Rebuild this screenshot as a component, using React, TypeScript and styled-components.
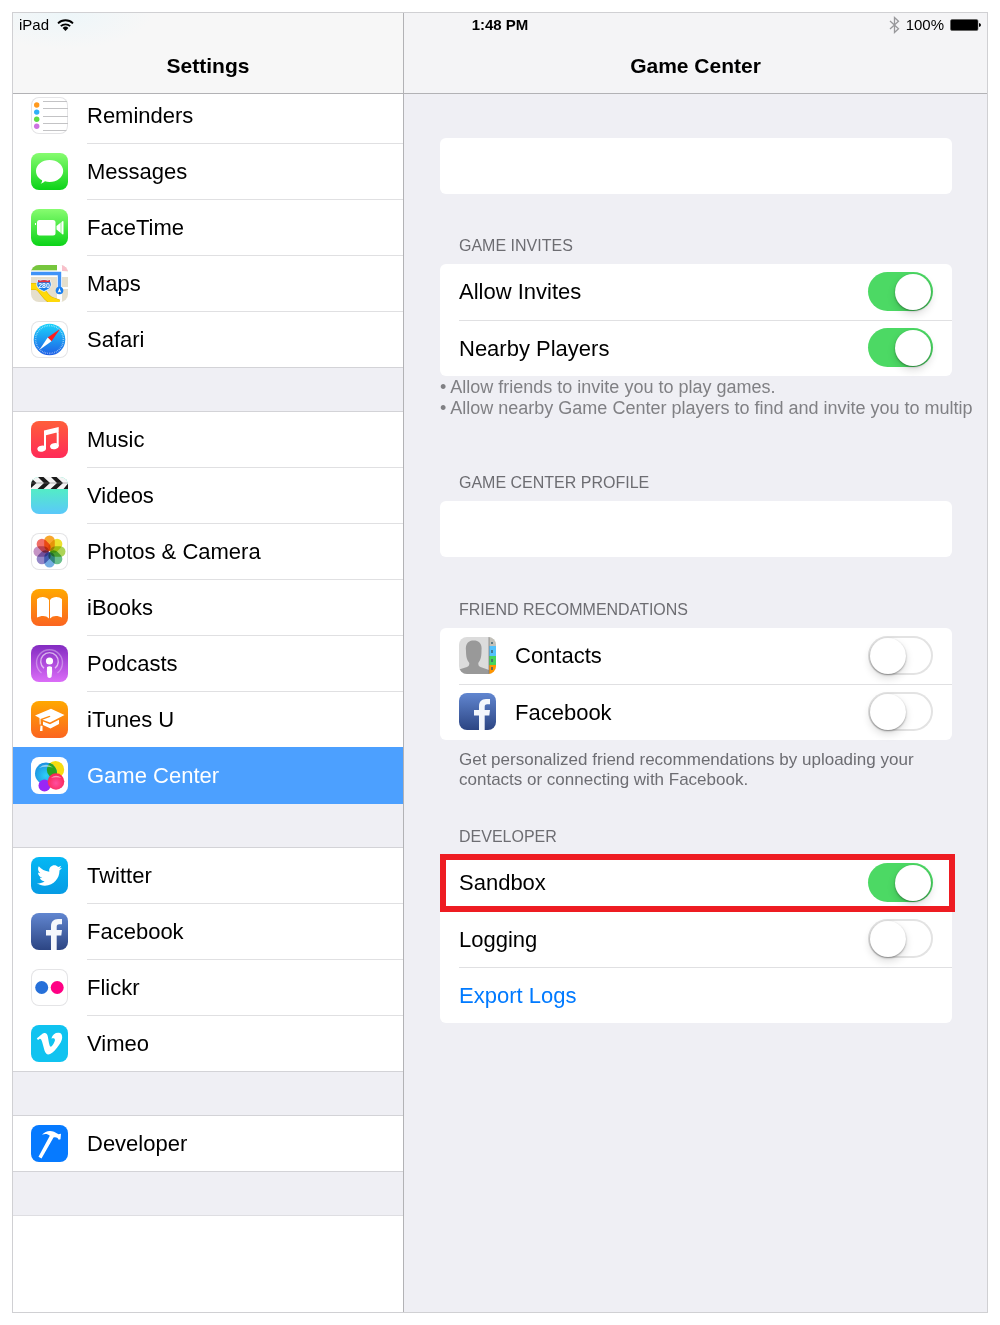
import React, { useState } from "react";
import styled, { createGlobalStyle, css } from "styled-components";
import { FaTwitter, FaVimeoV } from "react-icons/fa";

const GlobalStyle = createGlobalStyle`
  *, *::before, *::after { box-sizing: border-box; }
  body {
    margin: 0;
    background: #fff;
    color: #000;
    font-family: "Liberation Sans", Arial, Helvetica, sans-serif;
  }
`;

const SIDEBAR_WIDTH = "391px";

/* ---------- frame ---------- */

const Page = styled.div`
  min-height: 100vh;
  padding: 12px;
  display: flex;
`;

const Device = styled.div`
  flex: 1;
  min-width: 0;
  display: flex;
  flex-direction: column;
  border: 1px solid #d0d0d3;
`;

const TopBar = styled.header`
  position: relative;
  z-index: 1;
  display: grid;
  grid-template-columns: ${SIDEBAR_WIDTH} 1fr;
  grid-template-rows: 24px 56px;
  border-bottom: 1px solid #b2b2b5;
`;

const TitleCell = styled.div<{ $side: "left" | "right" }>`
  grid-row: 1 / 3;
  grid-column: ${(p) => (p.$side === "left" ? 1 : 2)};
  display: flex;
  align-items: flex-end;
  justify-content: center;
  padding-bottom: 15px;
  background: ${(p) =>
    p.$side === "left"
      ? "radial-gradient(ellipse 90px 36px at 50px 0, #edf6f9, #f7f7f7)"
      : "#f4f4f6"};
  border-right: ${(p) => (p.$side === "left" ? "1px solid #b2b2b5" : "0")};
`;

const Title = styled.h1`
  margin: 0;
  font-size: 21px;
  line-height: 24px;
  font-weight: 700;
`;

const StatusBar = styled.div`
  grid-row: 1;
  grid-column: 1 / 3;
  display: grid;
  grid-template-columns: 1fr auto 1fr;
  align-items: center;
  padding: 0 6px;
  font-size: 15px;
  line-height: 24px;
`;

const StatusGroup = styled.div<{ $end?: boolean }>`
  display: flex;
  align-items: center;
  gap: ${(p) => (p.$end ? 6 : 8)}px;
  justify-content: ${(p) => (p.$end ? "flex-end" : "flex-start")};
`;

const Time = styled.time`
  font-weight: 700;
`;

const Body = styled.div`
  flex: 1;
  display: grid;
  grid-template-columns: ${SIDEBAR_WIDTH} minmax(0, 1fr);
`;

/* ---------- sidebar ---------- */

const Sidebar = styled.nav`
  display: flex;
  flex-direction: column;
  gap: 44px;
  background: #efeff4;
  border-right: 1px solid #b2b2b5;
`;

const NavGroup = styled.ul<{ $scrolled?: boolean }>`
  list-style: none;
  margin: ${(p) => (p.$scrolled ? "-6px 0 0" : "0")};
  padding: 0;
  background: #fff;
  box-shadow: 0 -1px #d3d3d7, 0 -1px #d3d3d7 inset;
`;

const NavTail = styled.div`
  flex: 1;
  background: #fff;
  box-shadow: 0 -1px #dedee2;
`;

const NavLabel = styled.span`
  flex: 1;
  align-self: stretch;
  display: flex;
  align-items: center;
  border-bottom: 1px solid #e0e0e2;
`;

const NavLink = styled.a<{ $selected?: boolean }>`
  position: relative;
  display: flex;
  align-items: center;
  gap: 19px;
  height: 56px;
  padding-left: 18px;
  font-size: 22px;
  line-height: 26px;
  color: #000;
  text-decoration: none;
  li:last-child > & ${NavLabel} {
    border-color: transparent;
  }
  ${(p) =>
    p.$selected &&
    css`
      background: #4ca0ff;
      box-shadow: 0 -1px #4ca0ff;
      color: #fff;
    `}
`;

/* ---------- detail pane ---------- */

const Main = styled.main`
  overflow: hidden;
  padding: 44px 35px 44px 36px;
  background: #efeff4;
`;

const Section = styled.section<{ $gap?: number }>`
  margin-top: ${(p) => p.$gap ?? 0}px;
`;

const SectionTitle = styled.h2`
  margin: 0;
  padding: 0 19px 8px;
  font-size: 16px;
  line-height: 20px;
  font-weight: 400;
  color: #6d6d72;
  text-transform: uppercase;
`;

const Card = styled.div`
  min-height: 56px;
  padding-left: 19px;
  background: #fff;
  border-radius: 6px;
`;

const Row = styled.div<{ $marked?: boolean }>`
  display: flex;
  align-items: center;
  gap: 19px;
  height: 56px;
  padding-right: 19px;
  font-size: 22px;
  line-height: 26px;
  & + & {
    border-top: 1px solid #e0e0e2;
  }
  ${(p) =>
    p.$marked &&
    css`
      position: relative;
      &::after {
        content: "";
        position: absolute;
        inset: -1px -3px -1px -19px;
        border: 6px solid #ee1c22;
        pointer-events: none;
      }
    `}
`;

const RowLabel = styled.label`
  flex: 1;
`;

const Switch = styled.input`
  appearance: none;
  flex: none;
  display: flex;
  width: 65px;
  height: 39px;
  margin: 0 0 2px;
  padding: 2px;
  border-radius: 20px;
  background: #fff;
  box-shadow: inset 0 0 0 2px #e3e3e3;
  cursor: pointer;
  &::before {
    content: "";
    width: 36px;
    height: 36px;
    border-radius: 50%;
    background: #fff;
    box-shadow: 0 1px 2px rgba(0, 0, 0, 0.35), 0 4px 9px rgba(0, 0, 0, 0.14);
  }
  &:checked {
    justify-content: flex-end;
    background: #4cd964;
    box-shadow: none;
  }
`;

const LinkButton = styled.button`
  padding: 0;
  border: 0;
  background: none;
  font: inherit;
  color: #007aff;
  cursor: pointer;
`;

const Hints = styled.ul`
  list-style: none;
  margin: 0;
  padding: 1px 0 0;
  font-size: 18px;
  line-height: 21px;
  color: #808084;
  white-space: nowrap;
`;

const Footnote = styled.p`
  margin: 0;
  padding: 10px 19px 0;
  font-size: 17px;
  line-height: 20px;
  color: #6d6d72;
`;

/* ---------- icons ---------- */

const Tile = styled.svg.attrs({ viewBox: "0 0 37 37", "aria-hidden": true })<{
  $bg: string;
  $outlined?: boolean;
}>`
  flex: none;
  width: 37px;
  height: 37px;
  margin-bottom: 2px;
  border-radius: 8px;
  overflow: hidden;
  background: ${(p) => p.$bg};
  ${(p) => p.$outlined && "box-shadow: inset 0 0 0 1px #e4e4e6;"}
`;

const Petal = styled.rect`
  mix-blend-mode: multiply;
`;

const RemindersIcon = () => (
  <Tile $bg="#fff" $outlined>
    {["#ff9a1f", "#2fb0f8", "#5fdc46", "#cc73e1"].map((c, i) => (
      <circle key={c} cx="5.7" cy={8 + i * 7.1} r="2.7" fill={c} />
    ))}
    <path d="M12 4.5H36M12 11.5H37M12 19.5H37M12 26.5H37M12 33.5H36" stroke="#c3c3c5" />
  </Tile>
);

const MessagesIcon = () => (
  <Tile $bg="linear-gradient(#87fc70, #0bd318)">
    <path
      d="M18.6 7C26 7 32.2 11.8 32.2 18S26 29 18.6 29c-1.700 0-3.200-.2-4.600-.7-1.300 1.300-2.800 2-4.400 2.400 1-.9 1.600-2.200 1.500-3.500C7.300 25.300 5 22 5 18 5 11.800 11.200 7 18.600 7z"
      fill="#fff"
    />
  </Tile>
);

const FaceTimeIcon = () => (
  <Tile $bg="linear-gradient(#87fc70, #0bd318)">
    <rect x="6" y="11" width="18.500" height="15.500" rx="2.500" fill="#fff" />
    <path d="M25.500 17 31.300 12.200Q32.500 11.500 32.500 13V24.500Q32.500 26 31.300 25.200L25.500 20.500z" fill="#fff" />
    <path d="M30 12v13.500" stroke="#4be642" strokeWidth=".6" />
    <rect x="4" y="14" width="1" height="2" fill="#fff" />
  </Tile>
);

const MapsIcon = () => (
  <Tile $bg="#e5dfcd">
    <path d="M0 0H26V5.500H0z" fill="#76c63d" />
    <path d="M31 0H37V6H31z" fill="#f9c0cb" />
    <path d="M0 5.500H26V0h5V6l6 .5V12H31V22h6v2H31V37H26V12H0z" fill="#fff" />
    <path d="M-2 21.500H5C11 22 14 34 21 35.500L28 38" stroke="#d9b300" strokeWidth="7" fill="none" />
    <path d="M-2 21.500H5C11 22 14 34 21 35.500L28 38" stroke="#ffd90a" strokeWidth="6" fill="none" />
    <path d="M0 8.500H28.500V25" stroke="#3f93f8" strokeWidth="3.400" fill="none" />
    <circle cx="28.500" cy="25.500" r="3.800" fill="#1a80f0" />
    <path d="M28.500 23 30.200 27.500 28.500 26.800 26.800 27.500z" fill="#fff" />
    <path d="M7 14.500 9 15.500 13 14.500 17 15.500 19 14.500C19 17 21 18 20 21S16 25 13 26.500C10 25 7 24 6 21S7 17 7 14.500z" fill="#1b7ee8" stroke="#fff" strokeWidth=".8" />
    <path d="M7.200 14.800 9 15.700 13 14.900 17 15.700 18.800 14.800 19 17.200H7z" fill="#e8303a" />
    <text x="13" y="23" fontSize="7" fontWeight="700" fill="#fff" textAnchor="middle">280</text>
  </Tile>
);

const SafariIcon = () => (
  <Tile $bg="#fff" $outlined>
    <defs>
      <linearGradient id="safari-dial" x1="0" y1="0" x2="0" y2="1">
        <stop offset="0" stopColor="#1bd3fb" />
        <stop offset="1" stopColor="#1f5fe6" />
      </linearGradient>
    </defs>
    <circle cx="18.500" cy="18.500" r="15.800" fill="url(#safari-dial)" />
    <circle cx="18.500" cy="18.500" r="13.900" fill="none" stroke="#fff" strokeOpacity=".65" strokeWidth="1.600" strokeDasharray=".6 1.200" />
    <path d="M29 8 20.500 20.300 16.700 16.600z" fill="#ff1d1d" />
    <path d="M8.300 29 16.700 16.600 20.500 20.300z" fill="#fff" />
  </Tile>
);

const MusicIcon = () => (
  <Tile $bg="linear-gradient(#ff5e3a, #ff2a58)">
    <path d="M13 9.500 27.700 6V11L15 14.200V28H13zM25.700 8h2V25h-2z" fill="#fff" />
    <ellipse cx="10.700" cy="27.700" rx="4.400" ry="3" fill="#fff" transform="rotate(-12 10.700 27.700)" />
    <ellipse cx="23.400" cy="25.200" rx="4.400" ry="3" fill="#fff" transform="rotate(-12 23.400 25.200)" />
  </Tile>
);

const VideosIcon = () => (
  <Tile $bg="linear-gradient(#53eec4 30%, #5ac8fa)">
    <path d="M0 0H37V12H0z" fill="#f4f4f4" />
    <path
      d="M7 0h5.500L19 6h-6zM13 6h6l-6.500 6H6.500zM20 0h5.500L32 6h-6zM26 6h6l-6.500 6H19.500zM33 0h4v3.500zM37 6.500V12H32.500zM0 1 5.500 6H0zM0 6H5.500L0 11z"
      fill="#1b1b1b"
    />
    <path d="M0 6H37" stroke="#777" strokeWidth=".5" />
  </Tile>
);

const petals = ["#f7a01b", "#ecdf1c", "#a5d048", "#5dbb82", "#68a6e0", "#8a7dc2", "#c08bc0", "#f0635a"];

const PhotosIcon = () => (
  <Tile $bg="#fff" $outlined>
    {petals.map((c, i) => (
      <Petal
        key={c}
        x="-5.300"
        y="-16"
        width="10.600"
        height="15.500"
        rx="5.300"
        fill={c}
        fillOpacity=".92"
        transform={`translate(18.500 18.500) rotate(${i * 45})`}
      />
    ))}
  </Tile>
);

const IBooksIcon = () => (
  <Tile $bg="linear-gradient(#ffa800, #fb6420)">
    <path d="M18 11C16.500 8.700 14 8 11.700 8 9.500 8 7.500 8.800 6 10.200V28.500C10 26.500 15 26 18 29.500zM19 11C20.500 8.700 23 8 25.300 8 27.500 8 29.500 8.800 31 10.200V28.500C27 26.500 22 26 19 29.500z" fill="#fff" />
  </Tile>
);

const PodcastsIcon = () => (
  <Tile $bg="linear-gradient(#832bc1, #db6df8)">
    <g fill="none" stroke="#fff">
      <path d="M10.500 28A13 13 0 1 1 26.500 28" strokeOpacity=".35" strokeWidth="1.400" />
      <path d="M13 23.300A8.800 8.800 0 1 1 24 23.300" strokeOpacity=".6" strokeWidth="1.400" />
    </g>
    <circle cx="18.500" cy="16" r="3.600" fill="#fff" />
    <path d="M16 22Q18.500 20.300 21 22 21.500 27 20.500 32 18.500 34 16.500 32 15.500 27 16 22z" fill="#fff" />
  </Tile>
);

const ITunesUIcon = () => (
  <Tile $bg="linear-gradient(#ffa800, #fb6420)">
    <path d="M4 14.500 20 7.800 33.500 14 19 21.500 11.500 18.700 19.500 15.700 18.500 14.700 9.500 18 9.700 23.500H8.700L8.500 17z" fill="#fff" />
    <path d="M12 20.500 19 23.200 28 18.800V23L19.500 27.500 12 24z" fill="#fff" />
    <path d="M9.500 24.500 11.500 25V30H9z" fill="#fff" />
  </Tile>
);

const GameCenterIcon = () => (
  <Tile $bg="#fff">
    <defs>
      <radialGradient id="bubble-blue" cx=".5" cy=".6" r=".6">
        <stop offset="0" stopColor="#2fd0f7" />
        <stop offset="1" stopColor="#1c8fe0" />
      </radialGradient>
      <radialGradient id="bubble-pink" cx=".5" cy=".6" r=".6">
        <stop offset="0" stopColor="#ff4fa0" />
        <stop offset="1" stopColor="#fb2350" />
      </radialGradient>
      <clipPath id="bubble-clip">
        <circle cx="24.500" cy="12.700" r="8.700" />
      </clipPath>
    </defs>
    <circle cx="24.500" cy="12.700" r="8.700" fill="#f6dc10" />
    <circle cx="15" cy="16.500" r="11" fill="url(#bubble-blue)" />
    <circle cx="15" cy="16.500" r="11" fill="#28a322" clipPath="url(#bubble-clip)" />
    <circle cx="13.500" cy="28.500" r="6" fill="#9a26f5" />
    <circle cx="25" cy="24.500" r="8.300" fill="url(#bubble-pink)" />
    <path d="M8 11Q14.500 5 22 10.500 14 9 8 11zM20 21Q25 16.500 30.500 21 25 19.500 20 21z" fill="#fff" fillOpacity=".5" />
  </Tile>
);

const TwitterIcon = () => (
  <Tile $bg="linear-gradient(#04b8f4, #069be4)">
    <FaTwitter x="6" y="6" size={25} color="#fff" />
  </Tile>
);

const FacebookIcon = () => (
  <Tile $bg="linear-gradient(#6186d0, #2c4583)">
    <path d="M20 37V22.500H15V17h5V13.500C20 8.800 22.500 6 27 6h4v5.300H28.300C26.200 11.300 25.700 12.200 25.700 14V17H31l-.7 5.500H25.700V37z" fill="#f4f7fc" />
  </Tile>
);

const FlickrIcon = () => (
  <Tile $bg="#fff" $outlined>
    <circle cx="10.700" cy="18.500" r="6.500" fill="#2670d9" />
    <circle cx="26.200" cy="18.500" r="6.500" fill="#ff0084" />
  </Tile>
);

const VimeoIcon = () => (
  <Tile $bg="#10c3f0">
    <FaVimeoV x="4" y="4" size={29} color="#fff" />
  </Tile>
);

const DeveloperIcon = () => (
  <Tile $bg="#067aff">
    <path d="M11 9.800C14 6 19 5 23 6.800L27.500 9.300 30 8.800 29.500 14.200 27.700 14.800C26.500 12.500 25 12 22.500 12.500L10.500 33.500 7.500 31.800 18.800 10.700C16.500 8.500 14 8.500 11 9.800z" fill="#fff" />
  </Tile>
);

const ContactsIcon = () => (
  <Tile $bg="#dcdcdc">
    <path d="M0 37V32.500L8 30C10 29 10.300 28 10.300 26 8 23 7 20 7 14 6 6 10 3.500 14.700 3.500S23.500 6 22.500 14C22.500 20 21.500 23 19.300 26 19.300 28 19.500 29 21.500 30L30 33V37z" fill="#999" />
    <path d="M30 0h7v9h-7z" fill="#c3c1b9" />
    <path d="M30 9h7v10h-7z" fill="#54c1fb" />
    <path d="M30 19h7v9h-7z" fill="#45d45c" />
    <path d="M30 28h7v9h-7z" fill="#ff9500" />
    <path d="M30 0V37" stroke="#777" strokeWidth=".7" />
    <path d="M33 5v2M33 13v3M33 22v3M33 30v3" stroke="#3d6171" strokeWidth="1.500" />
  </Tile>
);

const WifiIcon = () => (
  <svg width="17" height="13" viewBox="0 0 17 13" aria-label="Wi-Fi" role="img">
    <g fill="none" stroke="#000" strokeWidth="1.800">
      <path d="M1 4.300A10.800 10.800 0 0 1 16 4.300" />
      <path d="M3.800 7.200A6.800 6.800 0 0 1 13.200 7.200" />
    </g>
    <path d="M5.600 9A4.200 4.200 0 0 1 11.400 9L8.500 12z" />
  </svg>
);

const BluetoothIcon = () => (
  <svg width="11" height="18" viewBox="0 0 11 18" aria-label="Bluetooth" role="img">
    <path d="M1 5 9.500 12.800 5.500 16.500V1.500L9.500 5.200 1 13" fill="none" stroke="#98989b" strokeWidth="1.300" />
  </svg>
);

const BatteryIcon = () => (
  <svg width="31" height="12" viewBox="0 0 31 12" aria-label="Battery" role="img">
    <rect x=".5" y=".5" width="27.500" height="11" rx="1.500" fill="#000" stroke="#555" strokeWidth=".6" />
    <path d="M29 4Q31 4.500 31 6T29 8z" />
  </svg>
);

/* ---------- data ---------- */

type NavItem = { name: string; Icon: React.ComponentType };

const navGroups: NavItem[][] = [
  [
    { name: "Reminders", Icon: RemindersIcon },
    { name: "Messages", Icon: MessagesIcon },
    { name: "FaceTime", Icon: FaceTimeIcon },
    { name: "Maps", Icon: MapsIcon },
    { name: "Safari", Icon: SafariIcon },
  ],
  [
    { name: "Music", Icon: MusicIcon },
    { name: "Videos", Icon: VideosIcon },
    { name: "Photos & Camera", Icon: PhotosIcon },
    { name: "iBooks", Icon: IBooksIcon },
    { name: "Podcasts", Icon: PodcastsIcon },
    { name: "iTunes U", Icon: ITunesUIcon },
    { name: "Game Center", Icon: GameCenterIcon },
  ],
  [
    { name: "Twitter", Icon: TwitterIcon },
    { name: "Facebook", Icon: FacebookIcon },
    { name: "Flickr", Icon: FlickrIcon },
    { name: "Vimeo", Icon: VimeoIcon },
  ],
  [{ name: "Developer", Icon: DeveloperIcon }],
];

type SwitchRowProps = { id: string; label: string; on?: boolean; marked?: boolean; icon?: React.ReactNode };

function SwitchRow({ id, label, on = false, marked, icon }: SwitchRowProps) {
  const [checked, setChecked] = useState(on);
  return (
    <Row $marked={marked}>
      {icon}
      <RowLabel htmlFor={id}>{label}</RowLabel>
      <Switch
        id={id}
        type="checkbox"
        role="switch"
        checked={checked}
        onChange={(e) => setChecked(e.target.checked)}
      />
    </Row>
  );
}

export default function App() {
  const [selected, setSelected] = useState("Game Center");
  return (
    <>
      <GlobalStyle />
      <Page>
        <Device>
          <TopBar>
            <TitleCell $side="left">
              <Title>Settings</Title>
            </TitleCell>
            <TitleCell $side="right">
              <Title>Game Center</Title>
            </TitleCell>
            <StatusBar>
              <StatusGroup>
                iPad
                <WifiIcon />
              </StatusGroup>
              <Time>1:48 PM</Time>
              <StatusGroup $end>
                <BluetoothIcon />
                100%
                <BatteryIcon />
              </StatusGroup>
            </StatusBar>
          </TopBar>
          <Body>
            <Sidebar>
              {navGroups.map((group, i) => (
                <NavGroup key={group[0].name} $scrolled={i === 0}>
                  {group.map(({ name, Icon }) => (
                    <li key={name}>
                      <NavLink
                        href="#"
                        $selected={name === selected}
                        aria-current={name === selected ? "page" : undefined}
                        onClick={(e) => {
                          e.preventDefault();
                          setSelected(name);
                        }}
                      >
                        <Icon />
                        <NavLabel>{name}</NavLabel>
                      </NavLink>
                    </li>
                  ))}
                </NavGroup>
              ))}
              <NavTail />
            </Sidebar>
            <Main>
              <Section>
                <Card />
              </Section>
              <Section $gap={42}>
                <SectionTitle>Game Invites</SectionTitle>
                <Card>
                  <SwitchRow id="allow-invites" label="Allow Invites" on />
                  <SwitchRow id="nearby-players" label="Nearby Players" on />
                </Card>
                <Hints>
                  <li>• Allow friends to invite you to play games.</li>
                  <li>• Allow nearby Game Center players to find and invite you to multip</li>
                </Hints>
              </Section>
              <Section $gap={54}>
                <SectionTitle>Game Center Profile</SectionTitle>
                <Card />
              </Section>
              <Section $gap={43}>
                <SectionTitle>Friend Recommendations</SectionTitle>
                <Card>
                  <SwitchRow id="contacts" label="Contacts" icon={<ContactsIcon />} />
                  <SwitchRow id="facebook" label="Facebook" icon={<FacebookIcon />} />
                </Card>
                <Footnote>
                  Get personalized friend recommendations by uploading your contacts or connecting with Facebook.
                </Footnote>
              </Section>
              <Section $gap={37}>
                <SectionTitle>Developer</SectionTitle>
                <Card>
                  <SwitchRow id="sandbox" label="Sandbox" on marked />
                  <SwitchRow id="logging" label="Logging" />
                  <Row>
                    <LinkButton type="button">Export Logs</LinkButton>
                  </Row>
                </Card>
              </Section>
            </Main>
          </Body>
        </Device>
      </Page>
    </>
  );
}
